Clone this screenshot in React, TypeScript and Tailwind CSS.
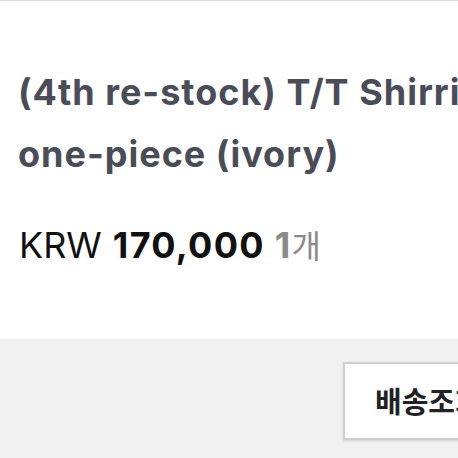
import React from "react";

export default function App() {
  return (
    <div
      className="w-[458px] h-[458px] overflow-hidden bg-white flex flex-col border-t border-[#d9d9d9]"
      style={{ fontFamily: "Inter, 'Noto Sans CJK KR', sans-serif" }}
    >
      <div className="flex-1 pl-[18px] pt-[60px] whitespace-nowrap">
        <h1 className="text-[36px] leading-[62px] font-bold text-[#4a4c58] tracking-[1px]">
          <span className="block">(4th re-stock) T/T Shirring</span>
          <span className="block">one-piece (ivory)</span>
        </h1>
        <div className="mt-[39px] flex items-baseline text-[36px] leading-[40px] pl-px">
          <span className="text-[#111] font-normal">KRW</span>
          <span className="ml-[11px] text-[#111] font-bold tracking-[1.3px]">170,000</span>
          <span className="ml-[10px] text-[#8a8a8a] font-bold">1</span>
          <span
            className="ml-px text-[#8a8a8a] font-normal text-[32px]"
            style={{ fontFamily: "'Noto Sans CJK KR', sans-serif" }}
          >
            개
          </span>
        </div>
      </div>
      <div className="h-[119px] bg-[#f0f0f0] pl-[343px] pt-[23px] flex">
        <button
          className="h-[78px] w-[200px] shrink-0 bg-white border-2 border-[#cfcfcf] shadow-[0_1px_2px_rgba(0,0,0,0.15)] pl-[30px] text-left text-[29px] font-bold text-[#222] whitespace-nowrap"
          style={{ fontFamily: "'Noto Sans CJK KR', sans-serif" }}
        >
          배송조회
        </button>
      </div>
    </div>
  );
}
